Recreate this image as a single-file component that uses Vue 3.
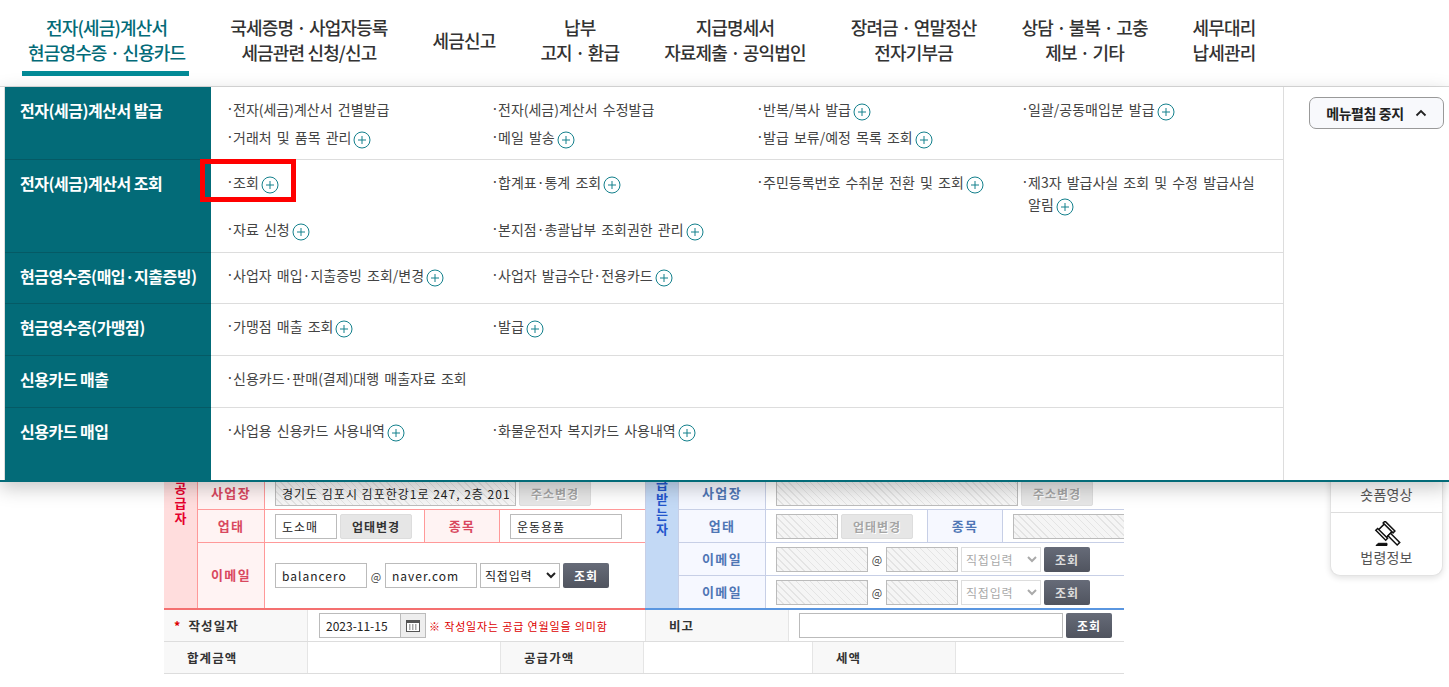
<script setup>
const navItems = [
  { lines: ['전자(세금)계산서', '현금영수증 · 신용카드'], active: true },
  { lines: ['국세증명 · 사업자등록', '세금관련 신청/신고'] },
  { lines: ['세금신고'] },
  { lines: ['납부', '고지 · 환급'] },
  { lines: ['지급명세서', '자료제출 · 공익법인'] },
  { lines: ['장려금 · 연말정산', '전자기부금'] },
  { lines: ['상담 · 불복 · 고충', '제보 · 기타'] },
  { lines: ['세무대리', '납세관리'] }
]

const menuRows = [
  {
    title: '전자(세금)계산서 발급',
    height: 73,
    items: [
      { text: '전자(세금)계산서 건별발급' },
      { text: '전자(세금)계산서 수정발급' },
      { text: '반복/복사 발급', plus: true },
      { text: '일괄/공동매입분 발급', plus: true },
      { text: '거래처 및 품목 관리', plus: true },
      { text: '메일 발송', plus: true },
      { text: '발급 보류/예정 목록 조회', plus: true }
    ]
  },
  {
    title: '전자(세금)계산서 조회',
    height: 93,
    items: [
      { text: '조회', plus: true },
      { text: '합계표·통계 조회', plus: true },
      { text: '주민등록번호 수취분 전환 및 조회', plus: true },
      { text: '제3자 발급사실 조회 및 수정 발급사실 알림', plus: true },
      { text: '자료 신청', plus: true },
      { text: '본지점·총괄납부 조회권한 관리', plus: true }
    ]
  },
  {
    title: '현금영수증(매입·지출증빙)',
    height: 51,
    items: [
      { text: '사업자 매입·지출증빙 조회/변경', plus: true },
      { text: '사업자 발급수단·전용카드', plus: true }
    ]
  },
  {
    title: '현금영수증(가맹점)',
    height: 52,
    items: [
      { text: '가맹점 매출 조회', plus: true },
      { text: '발급', plus: true }
    ]
  },
  {
    title: '신용카드 매출',
    height: 52,
    items: [{ text: '신용카드·판매(결제)대행 매출자료 조회', wide: true }]
  },
  {
    title: '신용카드 매입',
    height: 72,
    items: [
      { text: '사업용 신용카드 사용내역', plus: true },
      { text: '화물운전자 복지카드 사용내역', plus: true }
    ]
  }
]
</script>

<template>
  <div class="page">
    <nav class="topnav">
      <a
        v-for="(item, i) in navItems"
        :key="i"
        class="nav-item"
        :class="{ active: item.active }"
      >
        <span v-for="line in item.lines" :key="line">{{ line }}</span>
      </a>
    </nav>

    <section class="form">
      <div class="party supplier">
        <div class="side"><span>공급자</span></div>
        <div class="rows">
          <div class="frow">
            <div class="lab">사업장</div>
            <div class="val">
              <input class="ipt hatch w241" value="경기도 김포시 김포한강1로 247, 2층 201" readonly />
              <button class="btn off">주소변경</button>
            </div>
          </div>
          <div class="frow">
            <div class="lab">업태</div>
            <div class="val w159">
              <input class="ipt w62" value="도소매" readonly />
              <button class="btn plain">업태변경</button>
            </div>
            <div class="lab lab2">종목</div>
            <div class="val pad10"><input class="ipt w112" value="운동용품" readonly /></div>
          </div>
          <div class="frow tall">
            <div class="lab">이메일</div>
            <div class="val">
              <input class="ipt w92" value="balancero" readonly />
              <span class="at">@</span>
              <input class="ipt w92" value="naver.com" readonly />
              <select class="sel"><option>직접입력</option></select>
              <button class="btn dark">조회</button>
            </div>
          </div>
        </div>
      </div>

      <div class="party receiver">
        <div class="side"><span>공급받는자</span></div>
        <div class="rows">
          <div class="frow">
            <div class="lab">사업장</div>
            <div class="val">
              <input class="ipt hatch w242" readonly />
              <button class="btn off">주소변경</button>
            </div>
          </div>
          <div class="frow">
            <div class="lab">업태</div>
            <div class="val w161">
              <input class="ipt hatch w62" readonly />
              <button class="btn off">업태변경</button>
            </div>
            <div class="lab lab2">종목</div>
            <div class="val pad10 clip"><input class="ipt hatch w130" readonly /></div>
          </div>
          <div v-for="n in 2" :key="n" class="frow">
            <div class="lab">이메일</div>
            <div class="val">
              <input class="ipt hatch w92" readonly />
              <span class="at">@</span>
              <input class="ipt hatch w72" readonly />
              <select class="sel sel-off" disabled><option>직접입력</option></select>
              <button class="btn dark dim">조회</button>
            </div>
          </div>
        </div>
      </div>

      <div class="info date-row">
        <div class="th th-date"><i>*</i>작성일자</div>
        <div class="td date-cell">
          <input class="ipt w82" value="2023-11-15" readonly />
          <span class="cal">
            <svg width="14" height="13" viewBox="0 0 14 13">
              <rect x="0.5" y="1.5" width="13" height="11" fill="#fff" stroke="#555" />
              <rect x="0.5" y="1.5" width="13" height="2.5" fill="#555" />
              <path d="M3 6h1.5M6 6h1.5M9 6h1.5M3 8h1.5M6 8h1.5M9 8h1.5M3 10h1.5M6 10h1.5M9 10h1.5" stroke="#555" />
            </svg>
          </span>
          <span class="note">※ 작성일자는 공급 연월일을 의미함</span>
        </div>
        <div class="th th-memo">비고</div>
        <div class="td memo-cell">
          <input class="ipt w264" readonly />
          <button class="btn dark">조회</button>
        </div>
      </div>
      <div class="info sum-row">
        <div class="th">합계금액</div>
        <div class="td"></div>
        <div class="th">공급가액</div>
        <div class="td"></div>
        <div class="th">세액</div>
        <div class="td"></div>
      </div>
    </section>

    <aside class="quick">
      <div class="quick-item short">숏폼영상</div>
      <div class="quick-item">
        <svg width="28" height="26" viewBox="0 0 28 26" fill="none" stroke="#111" stroke-width="1.5">
          <g transform="rotate(45 12 10)">
            <rect x="6.5" y="5" width="11" height="9" fill="#fff" />
            <rect x="5" y="3" width="14" height="2.6" fill="#fff" />
            <rect x="5" y="13.4" width="14" height="2.6" fill="#fff" />
            <rect x="17.5" y="7.7" width="13" height="3.6" fill="#fff" />
          </g>
          <path d="M3 24.5h11v-2.2H5.2z" fill="#111" stroke-width="1" />
        </svg>
        <span>법령정보</span>
      </div>
    </aside>

    <div class="megamenu">
      <div class="menu-main">
        <div
          v-for="row in menuRows"
          :key="row.title"
          class="menu-row"
          :style="{ height: row.height + 'px' }"
        >
          <div class="menu-title">{{ row.title }}</div>
          <ul class="menu-items">
            <li v-for="item in row.items" :key="item.text" :class="{ wide: item.wide }">
              <span class="dot">·</span>{{ item.text }}<svg
                v-if="item.plus"
                class="plus"
                width="18"
                height="18"
                viewBox="0 0 18 18"
              >
                <circle cx="9" cy="9" r="8" fill="#fff" stroke="#13808c" />
                <path d="M9 5v8M5 9h8" stroke="#13808c" fill="none" />
              </svg>
            </li>
          </ul>
        </div>
      </div>
      <div class="menu-side">
        <button class="stop-btn">
          메뉴펼침 중지
          <svg width="12" height="8" viewBox="0 0 12 8">
            <path d="M1.5 6.5 6 2l4.5 4.5" fill="none" stroke="#222" stroke-width="1.8" />
          </svg>
        </button>
      </div>
      <div class="highlight"></div>
    </div>
  </div>
</template>

<style>
html,
body {
  margin: 0;
  background: #fff;
}
</style>

<style scoped>
.page {
  position: relative;
  height: 687px;
  overflow: hidden;
  font-family: 'Noto Sans CJK KR', 'Noto Sans', sans-serif;
  color: #333;
}

.topnav {
  display: flex;
  gap: 45px;
  box-sizing: border-box;
  height: 87px;
  padding: 15px 0 0 28px;
  border-bottom: 1px solid #ddd;
}

.nav-item {
  position: relative;
  display: flex;
  flex-direction: column;
  justify-content: center;
  height: 50px;
  font-size: 18px;
  font-weight: 500;
  line-height: 25px;
  letter-spacing: -0.85px;
  text-align: center;
  white-space: nowrap;
  color: #333;
}

.nav-item.active {
  color: #036b78;
}

.nav-item.active::after {
  content: '';
  position: absolute;
  left: -6px;
  right: -4px;
  top: 56px;
  height: 5px;
  background: #028a96;
}

.form {
  display: grid;
  grid-template-columns: 481px 479px;
  width: 960px;
  margin: 390px 0 0 164px;
  font-size: 12px;
}

.party {
  display: flex;
  height: 133px;
  border-bottom: 2px solid #f47070;
  box-sizing: border-box;
}

.receiver {
  border-bottom-color: #5a96e0;
}

.side {
  flex: none;
  width: 34px;
  overflow: hidden;
  background: #fdd;
  border-right: 1px solid #f99;
  box-sizing: border-box;
  text-align: center;
  font-size: 13px;
  font-weight: 700;
  line-height: 15px;
  color: #e6002d;
  padding-top: 3px;
}

.side span {
  display: block;
  width: 14px;
  margin: 0 auto;
  word-break: break-all;
}

.receiver .side {
  background: #c3d9f5;
  border-right-color: #c7cfe6;
  border-left: 1px solid #c7cfe6;
  color: #2255cc;
}

.receiver .side span {
  margin-top: -19px;
}

.rows {
  flex: 1;
  min-width: 0;
}

.frow {
  display: flex;
  height: 33px;
  box-sizing: border-box;
  border-bottom: 1px solid #f99;
}

.frow.tall {
  height: 65px;
  border-bottom: 0;
}

.receiver .frow {
  border-bottom-color: #c7cfe6;
}

.receiver .frow:last-child {
  height: 32px;
  border-bottom: 0;
}

.lab {
  flex: none;
  display: flex;
  align-items: center;
  justify-content: center;
  box-sizing: border-box;
  width: 67px;
  padding-bottom: 2px;
  background: #fff3f3;
  border-right: 1px solid #f99;
  color: #d9485f;
  font-weight: 700;
  font-size: 13px;
  letter-spacing: 1.4px;
}

.receiver .lab {
  width: 87px;
  background: #f6f8ff;
  border-right-color: #c7cfe6;
  color: #4f76b5;
}

.lab.lab2 {
  width: 76px;
  border-left: 1px solid #f99;
}

.receiver .lab.lab2 {
  width: 76px;
  border-left-color: #c7cfe6;
}

.val {
  display: flex;
  align-items: center;
  gap: 3px;
  padding-left: 10px;
  min-width: 0;
}

.val.w159 {
  width: 159px;
  box-sizing: border-box;
  flex: none;
}

.val.w161 {
  width: 161px;
  box-sizing: border-box;
  flex: none;
}

.val.clip {
  overflow: hidden;
  flex: 1;
}

.ipt {
  flex: none;
  box-sizing: border-box;
  height: 25px;
  padding: 0 6px;
  border: 1px solid #bbb;
  border-radius: 0;
  background: #fff;
  font: 12px 'Noto Sans CJK KR', sans-serif;
  letter-spacing: 1px;
  color: #222;
  outline: none;
}

.hatch {
  background: repeating-linear-gradient(45deg, #f5f5f5 0 4px, #e4e4e4 4px 5px);
}

.w241 { width: 241px; }
.w242 { width: 242px; }
.w62 { width: 62px; }
.w72 { width: 72px; }
.w82 { width: 82px; }
.w92 { width: 92px; }
.w112 { width: 112px; }
.w130 { width: 130px; }
.w264 { width: 264px; }

.btn {
  flex: none;
  box-sizing: border-box;
  width: 72px;
  height: 25px;
  padding: 0;
  border: 1px solid #ddd;
  border-radius: 2px;
  background: #e6e6e6;
  font: 700 12px 'Noto Sans CJK KR', sans-serif;
  letter-spacing: 1px;
  color: #333;
}

.btn.off {
  color: #a5a5a5;
  text-shadow: 1px 1px 0 #fff;
}

.btn.dark {
  width: 46px;
  border: 0;
  background: linear-gradient(#666b78, #50545f);
  color: #fff;
}

.btn.dark.dim {
  color: #ddd;
}

.at {
  flex: none;
  width: 12px;
  text-align: center;
  font-size: 11px;
  color: #444;
}

.sel {
  flex: none;
  box-sizing: border-box;
  width: 80px;
  height: 25px;
  border: 1px solid #bbb;
  border-radius: 0;
  background: #fff;
  font: 12px 'Noto Sans CJK KR', sans-serif;
  letter-spacing: 0.8px;
  color: #222;
}

.sel-off {
  border-color: #ddd;
  color: #aaa;
  opacity: 1;
}

.info {
  grid-column: 1 / -1;
  display: grid;
  box-sizing: border-box;
  height: 32px;
  border-bottom: 1px solid #ddd;
}

.date-row {
  grid-template-columns: 144px 337px 144px 335px;
}

.sum-row {
  grid-template-columns: 144px 192px 144px 168px 144px 168px;
}

.th {
  display: flex;
  align-items: center;
  padding-left: 23px;
  background: #f8f8f8;
  border-right: 1px solid #e5e5e5;
  font-size: 12.5px;
  font-weight: 700;
  letter-spacing: 1.1px;
  color: #333;
}

.th-date {
  padding-left: 10px;
}

.th-date i {
  margin-right: 7px;
  font-style: normal;
  color: #d00;
}

.td {
  display: flex;
  align-items: center;
  min-width: 0;
}

.th:not(:first-child) {
  border-left: 1px solid #e5e5e5;
}

.date-cell {
  padding-left: 11px;
}

.date-cell .ipt {
  letter-spacing: 0;
}

.cal {
  display: flex;
  align-items: center;
  justify-content: center;
  box-sizing: border-box;
  width: 25px;
  height: 25px;
  border: 1px solid #bbb;
  border-left: 0;
  background: #eee;
}

.note {
  margin-left: 3px;
  font-size: 11px;
  letter-spacing: 0.85px;
  white-space: nowrap;
  color: #d00;
}

.memo-cell {
  gap: 3px;
  padding-left: 10px;
}

.quick {
  position: absolute;
  left: 1330px;
  top: 440px;
  box-sizing: border-box;
  width: 113px;
  height: 136px;
  border: 1px solid #e3e3e3;
  border-top: 0;
  border-radius: 0 0 10px 10px;
  background: #fff;
  box-shadow: 0 2px 6px rgba(0, 0, 0, 0.12);
  font-size: 14px;
  letter-spacing: 0.2px;
  color: #555;
}

.quick-item {
  display: flex;
  flex-direction: column;
  align-items: center;
  height: 63px;
  padding-top: 8px;
  box-sizing: border-box;
}

.quick-item.short {
  height: 73px;
  justify-content: flex-end;
  padding: 0 0 8px;
  border-bottom: 1px solid #ddd;
}

.megamenu {
  position: absolute;
  top: 87px;
  left: 0;
  right: 0;
  display: flex;
  box-sizing: border-box;
  height: 395px;
  padding-left: 4px;
  background: #fff;
  border-bottom: 2px solid #036b78;
  box-shadow: 0 6px 18px rgba(0, 0, 0, 0.22);
}

.menu-main {
  flex: none;
  box-sizing: border-box;
  width: 1280px;
  border-left: 1px solid #ddd;
  border-right: 1px solid #ddd;
}

.menu-row {
  display: flex;
  box-sizing: border-box;
  border-bottom: 1px solid #ddd;
}

.menu-row:last-child {
  border-bottom: 0;
}

.menu-title {
  flex: none;
  box-sizing: border-box;
  width: 206px;
  margin-bottom: -1px;
  padding: 12px 0 0 15px;
  background: #036b78;
  border-bottom: 1px solid #055a65;
  font-size: 16px;
  font-weight: 700;
  line-height: 22px;
  letter-spacing: -0.5px;
  color: #fff;
}

.menu-row:last-child .menu-title {
  margin-bottom: 0;
  border-bottom: 0;
}

.menu-items {
  flex: 1;
  display: grid;
  grid-template-columns: repeat(4, 265px);
  align-content: start;
  row-gap: 2px;
  margin: 0;
  padding: 11px 0 0 16px;
  list-style: none;
  font-size: 14px;
  line-height: 22px;
  word-spacing: 2px;
  word-break: keep-all;
  color: #444;
}

.menu-items li {
  position: relative;
  min-height: 26px;
  padding: 0 14px 0 6px;
}

.menu-items li.wide {
  grid-column: span 2;
}

.dot {
  position: absolute;
  left: -1px;
  top: -1px;
}

.plus {
  margin-left: 2px;
  vertical-align: -6px;
}

.menu-side {
  flex: 1;
  padding: 10px 0 0 25px;
}

.stop-btn {
  display: flex;
  align-items: center;
  justify-content: center;
  gap: 11px;
  box-sizing: border-box;
  width: 135px;
  height: 32px;
  padding: 0;
  border: 1px solid #999;
  border-radius: 7px;
  background: #f8f9fc;
  font: 700 14px 'Noto Sans CJK KR', sans-serif;
  letter-spacing: -0.4px;
  color: #222;
}

.highlight {
  position: absolute;
  left: 200px;
  top: 72px;
  width: 96px;
  height: 43px;
  box-sizing: border-box;
  border: 5px solid #f00;
}
</style>
